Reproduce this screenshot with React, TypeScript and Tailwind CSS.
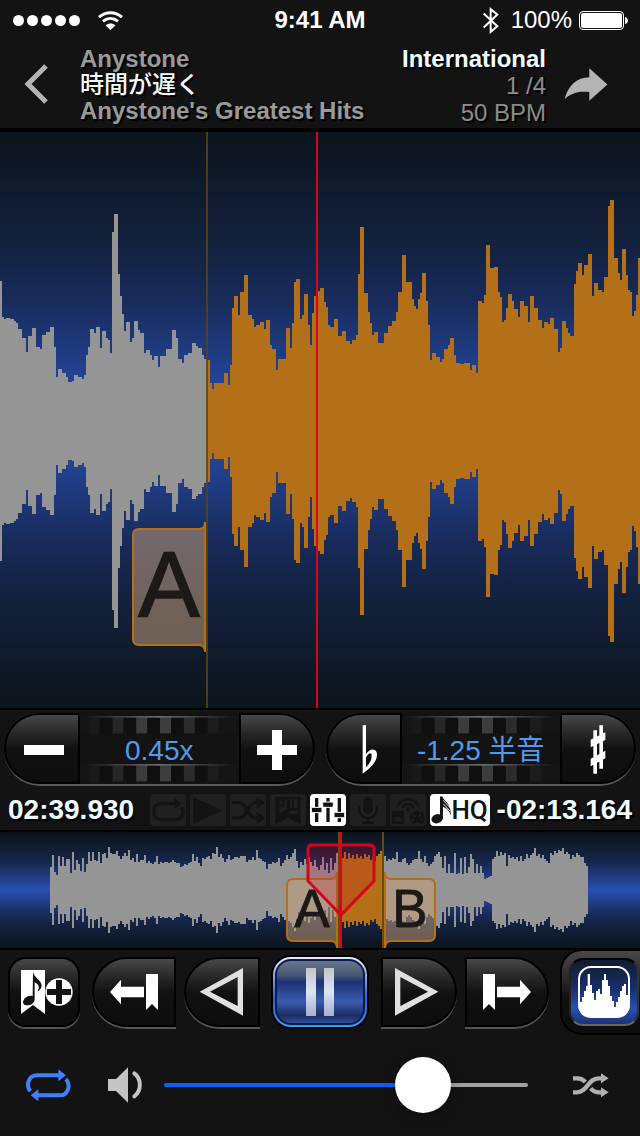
import React, { useState } from 'react';
import clsx from 'clsx';

type Step = [number, number];

// [x, top] pairs on a 1920 x 1728 canvas, mirrored around the middle
const MIDDLE = 867;
const PLAYED: Step[] = [
  [0, 446], [6, 556], [12, 561], [18, 558], [30, 561], [42, 567], [48, 574], [54, 591], [66, 617], [78, 659],
  [84, 612], [96, 587], [108, 646], [120, 652], [126, 610], [138, 600], [150, 586], [162, 646], [168, 734],
  [174, 711], [186, 724], [198, 734], [204, 751], [216, 746], [222, 728], [234, 736], [246, 740], [252, 728],
  [258, 669], [264, 646], [270, 592], [282, 603], [288, 584], [300, 647], [306, 597], [318, 619], [324, 624],
  [330, 662], [336, 299], [342, 246], [354, 425], [360, 492], [366, 546], [372, 597], [378, 571], [390, 629],
  [396, 618], [402, 566], [414, 594], [420, 603], [432, 662], [438, 654], [450, 669], [456, 684], [462, 673],
  [474, 706], [480, 671], [498, 651], [516, 594], [528, 618], [534, 680], [546, 692], [552, 669], [564, 663],
  [576, 633], [588, 641], [594, 648], [606, 670], [612, 680], [621, 680],
];
const LOOPED: Step[] = [
  [621, 684], [630, 753], [636, 770], [642, 754], [672, 722], [684, 759], [690, 700], [696, 529], [702, 492],
  [714, 550], [720, 480], [732, 429], [744, 548], [756, 560], [762, 584], [768, 579], [780, 570], [792, 591],
  [798, 564], [810, 639], [816, 650], [828, 713], [834, 680], [858, 587], [870, 647], [876, 574], [882, 451],
  [888, 440], [900, 560], [906, 549], [912, 486], [924, 579], [930, 638], [936, 543], [942, 493], [954, 476],
  [960, 467], [972, 509], [978, 526], [984, 579], [990, 586], [1002, 560], [1014, 611], [1026, 598],
  [1038, 626], [1050, 636], [1056, 624], [1068, 610], [1074, 426], [1080, 286], [1092, 483], [1104, 540],
  [1110, 573], [1116, 610], [1122, 600], [1134, 634], [1152, 602], [1164, 582], [1176, 568], [1188, 539],
  [1194, 480], [1206, 368], [1218, 451], [1236, 501], [1242, 523], [1248, 531], [1254, 501], [1260, 483],
  [1266, 423], [1278, 507], [1284, 579], [1290, 685], [1296, 664], [1308, 676], [1320, 690], [1326, 680],
  [1332, 650], [1344, 639], [1350, 619], [1362, 669], [1368, 692], [1380, 696], [1392, 694], [1410, 714],
  [1416, 700], [1428, 722], [1434, 507], [1446, 513], [1452, 489], [1458, 340], [1470, 409], [1482, 405],
  [1494, 480], [1500, 495], [1506, 570], [1512, 564], [1518, 529], [1524, 486], [1536, 508], [1542, 532],
  [1554, 556], [1560, 508], [1572, 521], [1584, 570], [1590, 492], [1602, 527], [1614, 563], [1626, 588],
  [1632, 570], [1644, 575], [1650, 559], [1662, 592], [1674, 661], [1680, 649], [1686, 568], [1698, 589],
  [1704, 602], [1710, 612], [1722, 455], [1728, 417], [1734, 393], [1746, 429], [1752, 399], [1764, 366],
  [1776, 493], [1782, 452], [1794, 474], [1806, 479], [1812, 435], [1824, 221], [1830, 204], [1842, 379],
  [1854, 424], [1860, 444], [1866, 352], [1878, 430], [1884, 474], [1890, 480], [1896, 551], [1902, 536],
  [1908, 489], [1914, 378], [1920, 378],
];

// half heights of the whole track, one per 2px column, starting at x = 50
const OVERVIEW = [
  23, 35, 18, 15, 34, 24, 33, 24, 31, 31, 17, 38, 20, 30, 26, 19, 32, 18, 26, 38, 29, 38, 30, 29, 38, 27, 36, 37, 32, 43,
  37, 36, 36, 39, 34, 31, 34, 37, 34, 40, 30, 32, 28, 36, 28, 30, 30, 35, 27, 29, 27, 26, 28, 34, 26, 28, 27, 28, 28, 27,
  28, 30, 28, 27, 27, 23, 24, 26, 25, 27, 28, 36, 29, 33, 27, 24, 32, 31, 33, 34, 31, 37, 36, 43, 33, 36, 32, 28, 31, 35,
  30, 31, 33, 33, 32, 34, 34, 34, 28, 30, 30, 33, 30, 40, 32, 31, 29, 28, 21, 26, 26, 28, 27, 28, 32, 24, 27, 30, 35, 31,
  33, 37, 41, 29, 22, 28, 25, 31, 26, 33, 28, 24, 30, 23, 20, 25, 33, 20, 27, 17, 32, 20, 27, 37, 30, 33, 32, 38, 31, 37,
  32, 35, 31, 36, 32, 34, 31, 36, 33, 35, 30, 32, 29, 34, 36, 39, 35, 34, 29, 31, 30, 32, 31, 38, 28, 28, 31, 32, 27, 25,
  27, 30, 31, 31, 39, 31, 28, 34, 27, 24, 26, 28, 34, 36, 38, 33, 22, 34, 17, 26, 17, 17, 37, 16, 17, 32, 16, 33, 17, 23,
  36, 31, 17, 26, 17, 24, 17, 11, 12, 13, 14, 31, 33, 39, 34, 38, 35, 37, 24, 35, 32, 33, 31, 33, 29, 34, 29, 31, 36, 32,
  35, 37, 42, 34, 36, 32, 35, 31, 29, 27, 37, 35, 39, 37, 40, 39, 42, 36, 38, 36, 31, 35, 33, 37, 35, 33, 33, 27, 24,
];

const WAVE_BG =
  'bg-[linear-gradient(to_bottom,#0c141b_0%,#12203a_18%,#182b5a_29%,#2850b2_50%,#182b5a_71%,#12203a_82%,#0c141b_100%)]';

function wavePath(steps: Step[]) {
  return steps
    .slice(0, -1)
    .map(([x, y], i) => `M${x} ${y}H${steps[i + 1][0]}V${MIDDLE * 2 - y}H${x}Z`)
    .join('');
}

function overviewPath(from: number, to: number) {
  return OVERVIEW.map((h, i) => ({ x: 50 + i * 2, h }))
    .filter(({ x }) => x >= from && x < to)
    .map(({ x, h }) => `M${x} ${58 - h}h2v${h * 2}h-2z`)
    .join('');
}

interface FlagProps {
  label: string;
  width: number;
  height: number;
  size: number;
  flip?: boolean;
}

function Flag({ label, width, height, size, flip }: FlagProps) {
  const r = width - 1;
  const b = height - 7;
  return (
    <svg width={width} height={height} className="block">
      <path
        d={`M${r} 0C${r} 4 ${r - 2} 7 ${r - 6} 7H7Q1 7 1 13V${b - 6}Q1 ${b} 7 ${b}H${r - 6}C${r - 2} ${b} ${r} ${b + 3} ${r} ${height}Z`}
        transform={flip ? `translate(${width} 0) scale(-1 1)` : undefined}
        fill="#c8a078"
        fillOpacity="0.52"
        stroke="#b37019"
        strokeWidth="2"
      />
      <text
        x={width / 2}
        y={Math.round(height / 2 + size * 0.33)}
        textAnchor="middle"
        fontSize={size}
        fill="#1c1917"
        stroke="#1c1917"
        strokeWidth={size / 60}
      >
        {label}
      </text>
    </svg>
  );
}

function Line({ at, className }: { at: number; className: string }) {
  return <div className={clsx('absolute inset-y-0 w-[2px]', className)} style={{ left: `${(at / 640) * 100}%` }} />;
}

function Gear() {
  return (
    <svg viewBox="0 0 480 54" className="block h-[18px] w-full" preserveAspectRatio="none">
      <defs>
        <linearGradient id="gearEdge" x1="10" x2="470" y1="0" y2="0" gradientUnits="userSpaceOnUse">
          <stop offset="0" stopColor="#151515" />
          <stop offset="0.5" stopColor="#6c6c6c" />
          <stop offset="1" stopColor="#151515" />
        </linearGradient>
      </defs>
      <rect width="480" height="54" fill="#151515" />
      {[28, 98, 170, 242, 314, 386].map((x, i) => (
        <rect
          key={x}
          x={x}
          y="2"
          width="34"
          height="50"
          fill={['#191919', '#262626', '#3c3c3c', '#3c3c3c', '#2c2c2c', '#1c1c1c'][i]}
        />
      ))}
      {[60, 132, 204, 276, 348].map((x) => (
        <path key={x} d={`M${x} 54V12q0-9 9-9h20q9 0 9 9v42z`} fill="#0f0f0f" />
      ))}
      <rect x="10" y="0" width="460" height="5" fill="url(#gearEdge)" />
    </svg>
  );
}

const KEY =
  'flex items-center justify-center border-[2px] border-black bg-[linear-gradient(to_bottom,#484848_0%,#2a2a2a_25%,#111_52%,#0d0d0d_100%)]';

interface DialProps {
  value: string;
  less: React.ReactNode;
  more: React.ReactNode;
  lessLabel: string;
  moreLabel: string;
}

function Dial({ value, less, more, lessLabel, moreLabel }: DialProps) {
  return (
    <div className="flex h-[73px] min-w-0 flex-1 overflow-hidden rounded-[36px] border-b-[2px] border-[#585858]">
      <button aria-label={lessLabel} className={clsx(KEY, 'w-[76px] shrink-0 rounded-l-[36px] pt-[2px]')}>
        {less}
      </button>
      <div className="flex min-w-0 flex-1 flex-col justify-between pt-[3px] pb-[2px]">
        <Gear />
        <output className="pt-1 text-center text-[28px] leading-[26px] whitespace-nowrap text-[#4f9bf0]">{value}</output>
        <Gear />
      </div>
      <button aria-label={moreLabel} className={clsx(KEY, 'w-[76px] shrink-0 rounded-r-[36px] pt-[2px]')}>
        {more}
      </button>
    </div>
  );
}

function Tag({ on, children }: { on?: boolean; children: React.ReactNode }) {
  return (
    <div className={clsx('h-8 w-9 shrink-0 rounded-[4px] text-[#131313]', on ? 'bg-white' : 'bg-[#202020]')}>
      <svg viewBox="0 0 108 96" className="block h-8 w-9" fill="currentColor">
        {children}
      </svg>
    </div>
  );
}

function StatusBar() {
  return (
    <div className="flex h-10 items-center px-3">
      <div className="flex flex-1 items-center gap-[18px]">
        <div className="flex gap-[3px] pl-[1px]">
          {[0, 1, 2, 3, 4].map((n) => (
            <span key={n} className="size-[11px] rounded-full bg-white" />
          ))}
        </div>
        <svg viewBox="294 30 76 58" width="25" height="19" fill="none" stroke="#fff" strokeWidth="9">
          <path d="M297 49C318 31 346 31 367 49" />
          <path d="M309 62C323 50 341 50 355 62" />
          <path d="M317 74C327 66 337 66 347 74L332 88Z" fill="#fff" stroke="none" />
        </svg>
      </div>
      <time className="text-[24px] leading-[28px] font-bold">9:41 AM</time>
      <div className="flex flex-1 items-center justify-end">
        <svg viewBox="492 22 48 80" width="16" height="27" fill="none" stroke="#fff" strokeWidth="6" className="mr-3">
          <path d="M494 41L535 79L515 96V28L535 44L494 83" />
        </svg>
        <span className="mr-[7px] text-[24px] leading-[28px]">100%</span>
        <svg viewBox="0 0 49 19" width="49" height="19">
          <rect x="0.5" y="0.5" width="44" height="18" rx="3.5" fill="none" stroke="#fff" />
          <rect x="2" y="2" width="41" height="15" rx="2" fill="#fff" />
          <path d="M46 6C50 7 50 12 46 13Z" fill="#fff" />
        </svg>
      </div>
    </div>
  );
}

function TrackInfo() {
  return (
    <div className="flex h-[88px] items-center pr-8 pl-6 text-[24px] leading-[26px] [text-shadow:2px_2px_1px_#000]">
      <button aria-label="Back" className="mr-8 shrink-0">
        <svg width="24" height="40" fill="none" stroke="#b4b4b4" strokeWidth="5">
          <path d="M22 2L4 20L22 38" />
        </svg>
      </button>
      <div className="min-w-0 flex-1 pt-[2px] font-bold whitespace-nowrap text-[#9a9a9a]">
        <p>Anystone</p>
        <h1 className="font-medium text-[#f4fbff]">時間が遅く</h1>
        <p>Anystone's Greatest Hits</p>
      </div>
      <div className="shrink-0 pt-[2px] text-right leading-[27px] text-[#8c8c8c]">
        <p className="font-bold text-[#f0fbff]">International</p>
        <p>1 /4</p>
        <p>50 BPM</p>
      </div>
      <button aria-label="Share" className="ml-[18px] shrink-0">
        <svg viewBox="732 204 132 100" width="44" height="33" fill="#b4b4b4">
          <path d="M733 299C743 258 770 232 808 232V205L863 254L808 303V277C775 273 752 280 733 299Z" />
        </svg>
      </button>
    </div>
  );
}

function MainWave() {
  return (
    <section aria-label="Waveform" className={clsx('relative h-[576px] overflow-hidden', WAVE_BG)}>
      <svg viewBox="0 0 1920 1728" preserveAspectRatio="none" shapeRendering="crispEdges" className="block h-full w-full">
        <path d={wavePath(PLAYED)} fill="#959595" />
        <path d={wavePath(LOOPED)} fill="#b37019" />
      </svg>
      <Line at={206} className="bg-[#5c4310]/85" />
      <Line at={316} className="bg-[#d8041c]" />
      <div className="absolute top-[390px] -translate-x-full" style={{ left: `${(206 / 640) * 100}%` }}>
        <Flag label="A" width={74} height={130} size={92} />
      </div>
    </section>
  );
}

function Overview() {
  return (
    <section aria-label="Track overview" className={clsx('relative h-[116px] overflow-hidden', WAVE_BG)}>
      <svg viewBox="0 0 640 116" preserveAspectRatio="none" shapeRendering="crispEdges" className="block h-full w-full">
        <path d={overviewPath(50, 340)} fill="#959595" />
        <path d={overviewPath(340, 384)} fill="#b37019" />
        <path d={overviewPath(384, 590)} fill="#959595" />
      </svg>
      <Line at={338} className="bg-[#6b4a12]" />
      <Line at={382} className="bg-[#6b4a12]" />
      <div className="absolute top-[40px] -translate-x-full" style={{ left: `${(338 / 640) * 100}%` }}>
        <Flag label="A" width={52} height={76} size={53} />
      </div>
      <div className="absolute top-[40px]" style={{ left: `${(384 / 640) * 100}%` }}>
        <Flag label="B" width={52} height={76} size={53} flip />
      </div>
      <svg width="70" height="76" className="absolute top-[11px] -translate-x-1/2" style={{ left: `${(341 / 640) * 100}%` }}>
        <path
          d="M6 2H64Q68 2 68 6V38L35 72L2 38V6Q2 2 6 2Z"
          fill="#d8041c"
          fillOpacity="0.2"
          stroke="#d8041c"
          strokeWidth="3"
        />
      </svg>
      <Line at={340} className="bg-[#d8041c]" />
    </section>
  );
}

function Tags() {
  return (
    <div className="flex h-[44px] items-center px-2 pt-1">
      <time className="text-[28px] leading-8 font-bold text-[#f0fbff] [text-shadow:2px_2px_1px_#000]">02:39.930</time>
      <div className="mr-[7px] ml-auto flex gap-1">
        <Tag>
          <path d="M74 29H34C4 29 4 77 34 77H74C102 77 102 50 94 40" fill="none" stroke="currentColor" strokeWidth="10" />
          <path d="M72 11L94 29L72 46Z" />
        </Tag>
        <Tag>
          <path d="M9 10L97 49L9 91Z" />
        </Tag>
        <Tag>
          <path d="M6 26H28C50 26 54 72 78 72H86M6 72H28C50 72 54 26 78 26H86" fill="none" stroke="currentColor" strokeWidth="10" />
          <path d="M80 8L106 26L80 44ZM80 54L106 72L80 90Z" />
        </Tag>
        <Tag>
          <path
            fillRule="evenodd"
            d="M16 8H92V92L54 70L16 92ZM28 20V30H38V20ZM28 38V60L50 44V16H44V38ZM60 16V42H66V16ZM72 16V42H82V16ZM60 50V60H82V50Z"
          />
        </Tag>
        <Tag on>
          <path d="M15 12h10v72H15zM49 12h10v72H49zM83 12h10v72H83z" />
          <g stroke="#fff" strokeWidth="3">
            <rect x="4" y="40" width="32" height="16" rx="4" />
            <rect x="38" y="24" width="32" height="16" rx="4" />
            <rect x="72" y="55" width="32" height="16" rx="4" />
          </g>
        </Tag>
        <Tag>
          <rect x="40" y="8" width="28" height="52" rx="14" />
          <path d="M28 36V48C28 80 80 80 80 48V36M54 72V86M36 87H72" fill="none" stroke="currentColor" strokeWidth="7" />
        </Tag>
        <Tag>
          <path d="M22 36C38 8 70 8 86 36M36 42C46 26 62 26 72 42" fill="none" stroke="currentColor" strokeWidth="8" />
          <circle cx="54" cy="46" r="6" />
          <path fillRule="evenodd" d="M6 50H42V90H6ZM14 70V83H34V70Z" />
          <path
            fillRule="evenodd"
            d="M82 50C108 50 112 88 92 90C88 84 76 84 72 90C52 86 58 50 82 50ZM70 62v7h7v-7zM86 60v7h7v-7zM64 74v6h7v-6zM92 74v6h7v-6z"
          />
        </Tag>
        <div className="flex h-8 w-[60px] shrink-0 items-center justify-center rounded-[4px] bg-white text-[#131313]">
          <svg viewBox="4 8 62 84" width="20" height="28" fill="currentColor" className="shrink-0">
            <ellipse cx="23" cy="77" rx="18" ry="14" transform="rotate(-18 23 77)" />
            <path d="M32 8H39C43 22 68 28 65 68C62 52 54 46 41 40V78H32Z" />
            <path d="M42 20L64 44M42 31L64 54" stroke="#fff" strokeWidth="3" />
          </svg>
          <span className="font-[Roboto,'Liberation_Sans',sans-serif] text-[26px] leading-8 font-medium">HQ</span>
        </div>
      </div>
      <time className="text-[28px] leading-8 font-bold text-[#f0fbff] [text-shadow:2px_2px_1px_#000]">-02:13.164</time>
    </div>
  );
}

function Transport() {
  const edge = 'h-[70px] shrink-0 shadow-[0_2px_0_#555]';
  return (
    <div className="flex h-[84px] items-center justify-between pl-2">
      <button aria-label="Add bookmark" className={clsx(KEY, edge, 'w-[72px] rounded-[18px] pl-[6px]')}>
        <svg viewBox="60 72 162 138" width="54" height="46" fill="#fff">
          <path d="M63 75H135V207L99 180L63 207Z" />
          <path
            d="M99 80C101 98 126 105 125 123C124 131 119 136 113 139C121 124 114 117 104 112V162C104 174 92 181 82 181C72 181 67 175 70 167C74 157 86 151 98 153Z"
            fill="#131313"
          />
          <circle cx="177" cy="141" r="41" />
          <path d="M168 105H186V132H213V150H186V177H168V150H141V132H168Z" fill="#131313" />
        </svg>
      </button>
      <div className="flex gap-2">
        <button aria-label="Previous bookmark" className={clsx(KEY, edge, 'w-[84px] rounded-l-[42px]')}>
          <svg viewBox="327 84 150 114" width="50" height="38" fill="#fff">
            <path d="M330 141L363 104V125H432V157H363V178ZM438 87H474V195L456 177L438 195Z" />
          </svg>
        </button>
        <button aria-label="Rewind" className={clsx(KEY, edge, 'w-[76px] rounded-l-[38px]')}>
          <svg viewBox="600 67 135 150" width="45" height="50" fill="#e0e0e0">
            <path fillRule="evenodd" d="M602 141L732 70V213ZM633 141L716 184V97Z" />
          </svg>
        </button>
      </div>
      <button
        aria-label="Pause"
        className="flex h-[74px] w-[98px] shrink-0 items-center justify-center rounded-[20px] border-[2px] border-black bg-[linear-gradient(to_bottom,#e8ecff_0%,#8fa4ea_25%,#2b5fd0_60%,#3d9bff_100%)] p-[2px]"
      >
        <span className="flex h-full w-full items-center justify-center gap-2 rounded-[16px] border-[2px] border-[#0b1c4c] bg-[linear-gradient(to_bottom,#6a7688_0%,#4a5672_22%,#1d3274_34%,#3a5cae_65%,#1b2d64_88%,#2d4f9c_100%)]">
          <span className="h-12 w-[10px] bg-[linear-gradient(to_bottom,#c0c4cc,#dde4f4_50%,#a4b0cc)]" />
          <span className="h-12 w-[10px] bg-[linear-gradient(to_bottom,#c0c4cc,#dde4f4_50%,#a4b0cc)]" />
        </span>
      </button>
      <div className="flex gap-2">
        <button aria-label="Forward" className={clsx(KEY, edge, 'w-[76px] rounded-r-[38px] pr-1')}>
          <svg viewBox="600 67 135 150" width="45" height="50" fill="#e0e0e0">
            <path fillRule="evenodd" d="M733 141L603 70V213ZM702 141L619 184V97Z" />
          </svg>
        </button>
        <button aria-label="Next bookmark" className={clsx(KEY, edge, 'w-[84px] rounded-r-[42px]')}>
          <svg viewBox="483 84 150 114" width="50" height="38" fill="#fff">
            <path d="M630 141L597 104V125H528V157H597V178ZM486 87H522V195L504 177L486 195Z" />
          </svg>
        </button>
      </div>
      <button
        aria-label="Waveform view"
        className="flex h-[86px] w-[80px] shrink-0 items-center justify-end rounded-l-[22px] border-y-[2px] border-l-[2px] border-black bg-[linear-gradient(to_bottom,#484848_0%,#222_40%,#0f0f0f_60%,#0d0d0d_100%)] pr-[1px]"
      >
        <span className="flex h-[68px] w-[70px] items-center justify-center rounded-[14px] border-[2px] border-t-black border-r-[#333] border-b-[#666] border-l-[#222] bg-[linear-gradient(to_bottom,#101c30,#182f68_45%,#2850b2_75%,#1a3274)]">
          <svg viewBox="774 60 162 162" width="54" height="54">
            <rect x="780" y="66" width="150" height="150" rx="36" fill="none" stroke="#fff" strokeWidth="6" />
            <path
              fill="#fff"
              d="M780 171H789V156H795V138H801V123H806V87H813V120H819V144H825V165H831V138H837V132H843V147H849V105H855V87H861V105H867V123H873V153H879V168H885V186H891V171H897V156H903V138H909V123H915V117H921V150H930V180Q930 216 894 216H816Q780 216 780 180Z"
            />
          </svg>
        </span>
      </button>
    </div>
  );
}

function VolumeRow() {
  const [volume, setVolume] = useState(75);

  return (
    <div className="flex h-[102px] items-center pr-[30px] pl-[26px]">
      <button aria-label="Repeat" className="mr-[37px] shrink-0">
        <svg viewBox="77 374 135 99" width="45" height="33" fill="none" stroke="#3f80ff" strokeWidth="12">
          <path d="M90 441C74 420 87 393 110 393H176M197 404C214 426 201 453 178 453H112" />
          <path d="M174 375L197 393L174 411ZM114 435L91 453L114 471Z" fill="#3f80ff" stroke="none" />
        </svg>
      </button>
      <svg viewBox="324 369 105 108" width="35" height="36" className="mr-[21px] shrink-0">
        <path d="M324 405H348L384 370V476L348 441H324Z" fill="#c4c4c4" />
        <path d="M403 388C425 404 425 441 403 457" fill="none" stroke="#c4c4c4" strokeWidth="12" strokeLinecap="round" />
      </svg>
      <input
        type="range"
        aria-label="Volume"
        min="0"
        max="100"
        value={volume}
        onChange={(e) => setVolume(parseInt(e.target.value))}
        className="h-1 min-w-0 flex-1 appearance-none rounded-full [&::-webkit-slider-thumb]:size-14 [&::-webkit-slider-thumb]:appearance-none [&::-webkit-slider-thumb]:rounded-full [&::-webkit-slider-thumb]:bg-white [&::-webkit-slider-thumb]:shadow-[0_4px_12px_rgba(0,0,0,0.3)]"
        style={{ background: `linear-gradient(to right, #0a60ff ${volume}%, #a0a0a0 ${volume}%)` }}
      />
      <button aria-label="Shuffle" className="ml-[45px] shrink-0">
        <svg viewBox="762 386 111 75" width="37" height="25" fill="none" stroke="#b0b0b0" strokeWidth="13">
          <path d="M762 402H774C786 402 793 406 799 413M815 432C822 440 829 444 840 444H848M762 444H774C804 444 808 402 838 402H848" />
          <path d="M846 387L869 402L846 417ZM846 429L869 444L846 459Z" fill="#b0b0b0" stroke="none" />
        </svg>
      </button>
    </div>
  );
}

export default function App() {
  return (
    <main className="min-h-screen w-full overflow-hidden bg-[#131313] font-['Liberation_Sans','Noto_Sans_CJK_JP',sans-serif] text-white">
      <header className="border-b-[4px] border-black">
        <StatusBar />
        <TrackInfo />
      </header>
      <MainWave />
      <div className="border-y-[2px] border-black">
        <div className="flex gap-[11px] px-1 pt-[3px]">
          <Dial
            value="0.45x"
            lessLabel="Slower"
            moreLabel="Faster"
            less={<span className="ml-1 h-[10px] w-10 bg-white" />}
            more={
              <svg width="40" height="40" fill="#fff">
                <path d="M15 0h10v15h15v10H25v15H15V25H0V15h15z" />
              </svg>
            }
          />
          <Dial
            value="-1.25 半音"
            lessLabel="Flat"
            moreLabel="Sharp"
            less={
              <svg viewBox="127 62 48 147" width="16" height="49" fill="#fff" className="ml-3">
                <path
                  fillRule="evenodd"
                  d="M129 63H139V150C150 130 172 132 172 150C172 175 150 192 129 208ZM139 160V189C151 177 156 166 156 154C156 142 145 146 139 160Z"
                />
              </svg>
            }
            more={
              <svg viewBox="807 62 48 147" width="16" height="49" fill="#fff">
                <path d="M817 78H828V208H817ZM835 63H846V193H835ZM809 106L853 84V107L809 129ZM809 163L853 139V162L809 186Z" />
              </svg>
            }
          />
        </div>
        <Tags />
      </div>
      <Overview />
      <div className="border-t-[2px] border-black">
        <Transport />
        <VolumeRow />
      </div>
    </main>
  );
}
